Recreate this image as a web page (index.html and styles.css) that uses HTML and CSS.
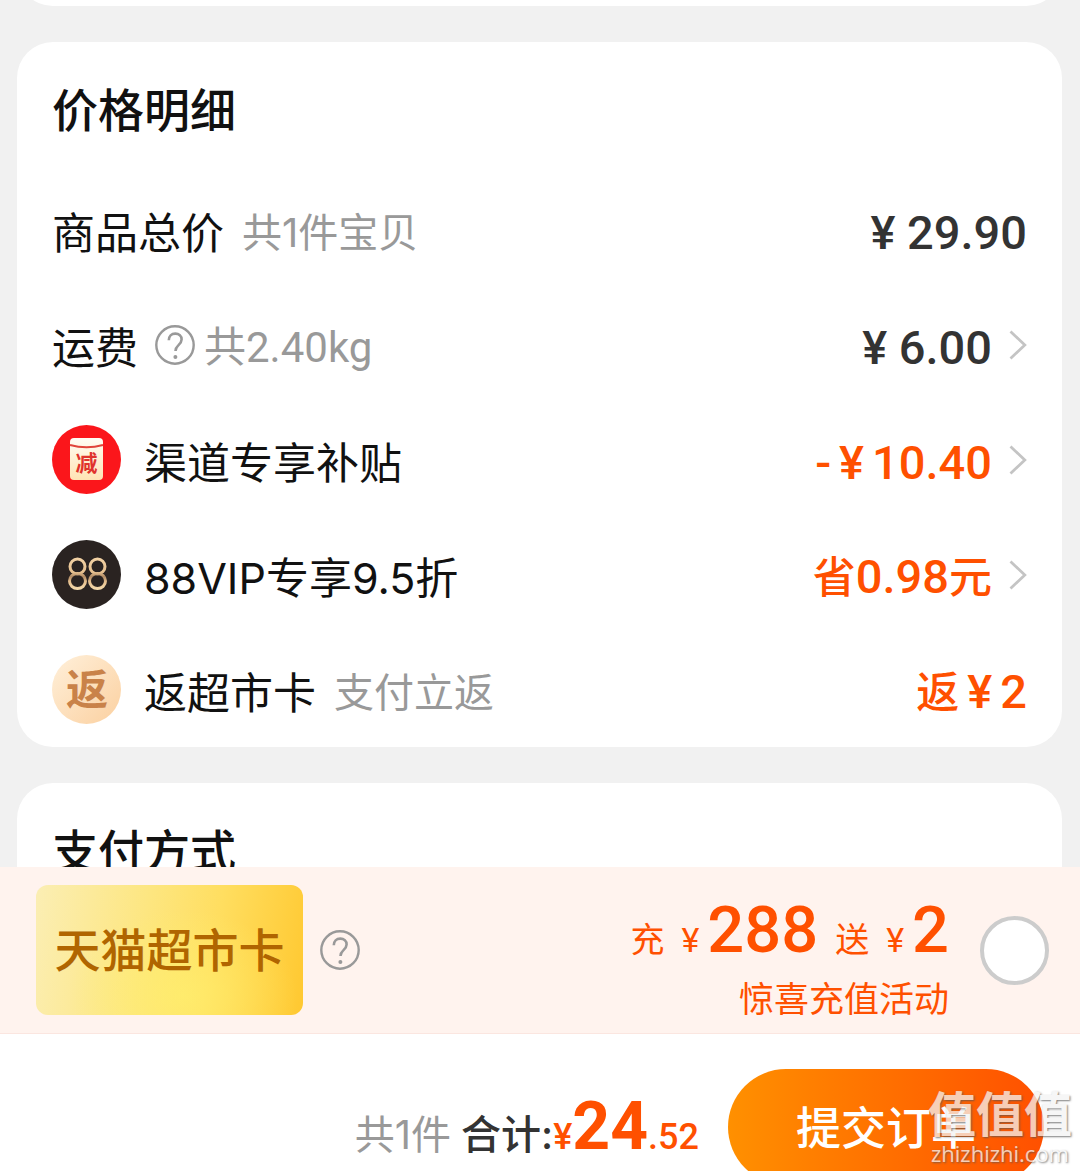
FILE: index.html
```html
<!DOCTYPE html>
<html lang="zh-CN">
<head>
<meta charset="utf-8">
<meta name="viewport" content="width=device-width, initial-scale=1">
<title>确认订单</title>
<link rel="stylesheet" href="styles.css">
</head>
<body>
<svg class="symbols" aria-hidden="true">
  <symbol id="help" viewBox="0 0 40 40">
    <circle cx="20" cy="20" r="18.7" fill="none" stroke="currentColor" stroke-width="2.4"/>
    <path d="M13.8 15.2c0-4 2.700-6.600 6.500-6.600 3.700 0 6.300 2.400 6.300 5.800 0 2.700-1.400 4.200-3.300 6-1.900 1.700-2.800 2.900-2.800 5.700" fill="none" stroke="currentColor" stroke-width="2.600"/>
    <circle cx="20.400" cy="32" r="2" fill="currentColor"/>
  </symbol>
  <symbol id="chevron" viewBox="0 0 18 30">
    <path d="M1.500 1.500 15.800 15 1.500 28.500" fill="none" stroke="currentColor" stroke-width="2.800"/>
  </symbol>
</svg>
<div class="screen">
  <main class="content">
    <section class="card card-previous"></section>
    <section class="card">
      <h2 class="card-title">价格明细</h2>
      <ul class="rows">
        <li class="row">
          <span class="label">商品总价</span>
          <span class="note">共1件宝贝</span>
          <span class="value"><span class="amount">¥ 29.90</span></span>
        </li>
        <li class="row">
          <span class="label">运费</span>
          <button class="help help-fee" type="button" aria-label="运费说明"><svg><use href="#help"/></svg></button>
          <span class="note note-weight">共2.40kg</span>
          <button class="value" type="button"><span class="amount">¥ 6.00</span><svg class="chevron"><use href="#chevron"/></svg></button>
        </li>
        <li class="row">
          <svg class="badge" viewBox="0 0 69 69" aria-hidden="true">
            <defs>
              <linearGradient id="packet" x1="0" y1="0" x2="0" y2="1">
                <stop offset="0" stop-color="#fffdf4"/>
                <stop offset="1" stop-color="#ffe3b4"/>
              </linearGradient>
            </defs>
            <circle cx="34.500" cy="34.500" r="34.500" fill="#fb161b"/>
            <rect x="18" y="13" width="33" height="42" rx="4" fill="url(#packet)"/>
            <path d="M18 20q16.500 4.500 33 0" fill="none" stroke="#e0453a" stroke-width="2"/>
            <text class="badge-off" x="34.500" y="46" text-anchor="middle">减</text>
          </svg>
          <span class="label">渠道专享补贴</span>
          <button class="value value-sale" type="button"><span class="amount amount-parts"><span>-</span><span>¥</span><span>10.40</span></span><svg class="chevron"><use href="#chevron"/></svg></button>
        </li>
        <li class="row">
          <svg class="badge" viewBox="0 0 69 69" aria-hidden="true">
            <defs>
              <linearGradient id="gold" gradientUnits="userSpaceOnUse" x1="0" y1="18" x2="0" y2="50">
                <stop offset="0" stop-color="#f3d2a4"/>
                <stop offset="0.450" stop-color="#e6c08f"/>
                <stop offset="0.580" stop-color="#b08a64"/>
                <stop offset="0.750" stop-color="#e6c08f"/>
                <stop offset="1" stop-color="#f5dcae"/>
              </linearGradient>
            </defs>
            <circle cx="34.500" cy="34.500" r="34.500" fill="#2a2321"/>
            <g fill="none" stroke="url(#gold)" stroke-width="3">
              <ellipse cx="25.500" cy="26.500" rx="7.500" ry="7.500"/>
              <ellipse cx="25.500" cy="41" rx="8" ry="7.500"/>
              <ellipse cx="45.500" cy="26.500" rx="7.500" ry="7.500"/>
              <ellipse cx="45.500" cy="41" rx="8" ry="7.500"/>
            </g>
          </svg>
          <span class="label">88VIP专享9.5折</span>
          <button class="value value-sale" type="button"><span class="amount"><span class="word">省</span>0.98<span class="word">元</span></span><svg class="chevron"><use href="#chevron"/></svg></button>
        </li>
        <li class="row">
          <svg class="badge" viewBox="0 0 69 69" aria-hidden="true">
            <defs>
              <linearGradient id="cream" x1="0" y1="0" x2="1" y2="1">
                <stop offset="0" stop-color="#fff0da"/>
                <stop offset="1" stop-color="#fbd0a0"/>
              </linearGradient>
            </defs>
            <circle cx="34.500" cy="34.500" r="34.500" fill="url(#cream)"/>
            <text class="badge-back" x="35" y="50" text-anchor="middle">返</text>
          </svg>
          <span class="label">返超市卡</span>
          <span class="note">支付立返</span>
          <span class="value value-sale"><span class="amount amount-parts"><span class="word">返</span><span>¥</span><span>2</span></span></span>
        </li>
      </ul>
    </section>
    <section class="card">
      <h2 class="card-title">支付方式</h2>
    </section>
  </main>

  <aside class="promo">
    <span class="gift-card">天猫超市卡</span>
    <button class="help" type="button" aria-label="超市卡说明"><svg><use href="#help"/></svg></button>
    <label class="offer" for="topup">
      <span class="offer-main">
        <span class="offer-part">充</span>
        <span class="offer-part">¥<b class="offer-number">288</b></span>
        <span class="offer-part">送</span>
        <span class="offer-part">¥<b class="offer-number">2</b></span>
      </span>
      <span class="offer-sub">惊喜充值活动</span>
    </label>
    <input class="tick" type="checkbox" id="topup">
  </aside>

  <footer class="checkout">
    <p class="summary">
      <span class="count">共1件</span>
      <span class="total">合计:</span>
      <span class="sum"><span class="sum-sign">¥</span><b class="sum-whole">24</b><b class="sum-cents">.52</b></span>
    </p>
    <button class="submit" type="button">提交订单</button>
    <div class="watermark">
      <span class="mark-name">值值值</span>
      <span class="mark-site">zhizhizhi.com</span>
    </div>
  </footer>
</div>
</body>
</html>
```
FILE: styles.css
```css
* {
  box-sizing: border-box;
}

body {
  margin: 0;
  background: #f1f1f1;
  color: #111;
  font-family: Inter, "Noto Sans CJK SC", sans-serif;
}

button {
  padding: 0;
  border: 0;
  background: none;
  color: inherit;
  font: inherit;
  cursor: pointer;
}

.symbols {
  display: none;
}

.screen {
  display: flex;
  flex-direction: column;
  height: 100vh;
  overflow: hidden;
}

.content {
  display: flex;
  flex: 1;
  flex-direction: column;
  gap: 36px;
  min-height: 0;
  padding: 0 18px 0 17px;
  overflow: hidden;
}

.card {
  flex: none;
  padding: 0 35px;
  border-radius: 36px;
  background: #fff;
}

.card-previous {
  height: 72px;
  margin-top: -66px;
}

.card-title {
  height: 130px;
  margin: 0;
  padding-top: 38px;
  font-size: 46px;
  font-weight: 500;
  line-height: 60px;
}

.rows {
  margin: 0;
  padding: 0;
  list-style: none;
}

.row {
  display: flex;
  align-items: center;
  height: 115px;
  line-height: 60px;
  white-space: nowrap;
}

.label,
.note,
.amount {
  padding-top: 6px;
}

.label {
  font-size: 43px;
}

.note {
  margin-left: 18px;
  color: #999;
  font-size: 40px;
}

.note-weight {
  margin-left: 9px;
  font-family: Roboto, "Noto Sans CJK SC", sans-serif;
  font-size: 42px;
}

.help,
.help svg {
  display: block;
  flex: none;
  width: 40px;
  height: 40px;
  color: #999;
}

.help-fee {
  margin-left: 17px;
}

.value {
  display: flex;
  align-items: center;
  margin-left: auto;
  color: #333;
  font-family: Roboto, "Noto Sans CJK SC", sans-serif;
  font-size: 47px;
  font-weight: 500;
}

.value-sale {
  color: #ff5000;
}

.amount-parts {
  display: flex;
  align-items: baseline;
  gap: 8px;
}

.word {
  font-size: 43px;
}

.chevron {
  width: 18px;
  height: 30px;
  margin-left: 17px;
  color: #c4c4c4;
}

.badge {
  width: 69px;
  height: 69px;
  margin-right: 23px;
}

.badge-off {
  fill: #e0332c;
  font-size: 22px;
  font-weight: 700;
}

.badge-back {
  fill: #c98249;
  font-size: 42px;
  font-weight: 700;
}

.promo {
  display: flex;
  flex: none;
  align-items: center;
  height: 167px;
  padding: 0 31px 0 36px;
  border-bottom: 1px solid #fbe6e0;
  background: #fff3ee;
}

.gift-card {
  width: 267px;
  margin-right: 17px;
  border-radius: 12px;
  background:
    radial-gradient(ellipse at 55% 85%, rgba(255, 240, 110, 0.7), rgba(255, 240, 110, 0) 55%),
    linear-gradient(100deg, #fbeeb4 0%, #fde680 40%, #ffde60 65%, #ffc830 100%);
  color: #b06500;
  font-size: 46px;
  font-weight: 500;
  line-height: 130px;
  text-align: center;
}

.offer {
  display: flex;
  flex-direction: column;
  align-items: flex-end;
  margin-left: auto;
  padding-top: 16px;
  color: #ff5000;
}

.offer-main {
  display: flex;
  align-items: baseline;
  gap: 17px;
  font-family: Roboto, "Noto Sans CJK SC", sans-serif;
  font-size: 34px;
  line-height: 72px;
}

.offer-number {
  margin-left: 8px;
  font-size: 65px;
  font-weight: 500;
}

.offer-sub {
  font-size: 35px;
  line-height: 46px;
}

.tick {
  flex: none;
  width: 69px;
  height: 69px;
  margin: 0 0 0 31px;
  border: 4px solid #ccc;
  border-radius: 50%;
  background: #fff;
  appearance: none;
}

.tick:checked {
  border-color: #ff5000;
  background: #ff5000;
}

.checkout {
  display: flex;
  position: relative;
  flex: none;
  align-items: flex-start;
  justify-content: flex-end;
  gap: 29px;
  height: 137px;
  padding: 35px 36px 0;
  overflow: hidden;
  background: #fff;
  white-space: nowrap;
}

.summary {
  display: flex;
  align-items: baseline;
  margin: 0;
  font-size: 40px;
  line-height: 116px;
}

.count {
  margin-right: 10px;
  color: #999;
}

.total {
  color: #333;
  font-weight: 500;
}

.sum {
  color: #ff5000;
  font-family: Roboto, "Noto Sans CJK SC", sans-serif;
  font-weight: 500;
}

.sum-sign,
.sum-cents {
  font-size: 36px;
}

.sum-cents {
  font-weight: 500;
}

.sum-whole {
  font-size: 66px;
}

.submit {
  flex: none;
  width: 316px;
  height: 116px;
  border-radius: 58px;
  background: linear-gradient(90deg, #ff9000, #ff5000);
  color: #fff;
  font-size: 45px;
  font-weight: 500;
  line-height: 120px;
}

.watermark {
  display: flex;
  position: absolute;
  right: 8px;
  bottom: 4px;
  flex-direction: column;
  align-items: center;
  color: #f4f4f4;
  text-shadow: 1px 1px 2px #555;
  opacity: 0.75;
}

.mark-name {
  font-size: 48px;
  font-weight: 700;
  line-height: 48px;
}

.mark-site {
  font-family: "Open Sans", sans-serif;
  font-size: 22px;
  line-height: 28px;
}
```
